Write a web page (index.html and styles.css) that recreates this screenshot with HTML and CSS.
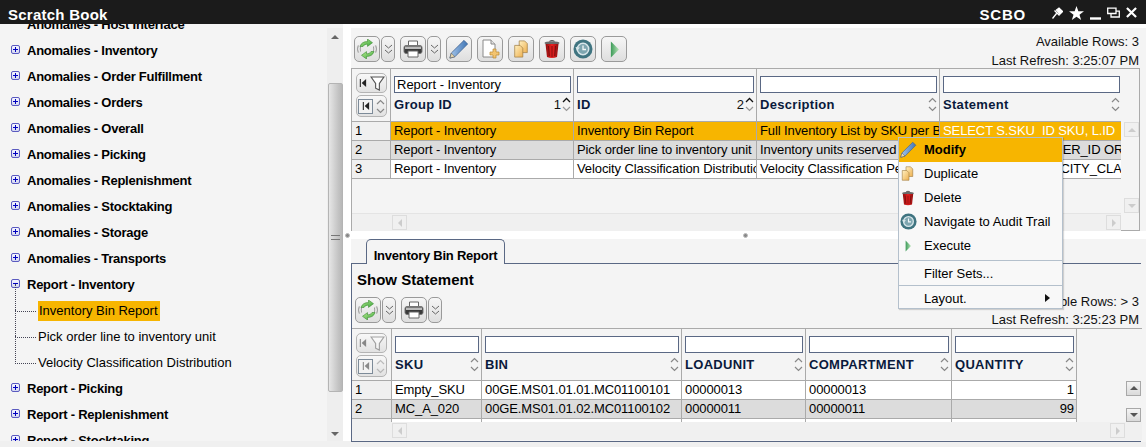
FILE: index.html
```html
<!DOCTYPE html>
<html lang="en">
<head>
    <meta charset="UTF-8">
    <title>Scratch Book</title>
    <link rel="stylesheet" href="styles.css">
</head>
<body>

<svg class="defs" width="0" height="0">
    <defs>
        <linearGradient id="grnA" x1="0" y1="0" x2="1" y2="1"><stop offset="0" stop-color="#b4ea8c"/><stop offset="1" stop-color="#3aa63c"/></linearGradient>
        <linearGradient id="grnB" x1="0" y1="0" x2="1" y2="0"><stop offset="0" stop-color="#3c9a58"/><stop offset="1" stop-color="#b8e4b8"/></linearGradient>
        <linearGradient id="redA" x1="0" y1="0" x2="1" y2="0"><stop offset="0" stop-color="#8c1010"/><stop offset=".5" stop-color="#ee2020"/><stop offset="1" stop-color="#8c1010"/></linearGradient>
        <linearGradient id="yelA" x1="0" y1="0" x2="1" y2="1"><stop offset="0" stop-color="#fff0c0"/><stop offset="1" stop-color="#eeb050"/></linearGradient>
        <linearGradient id="blueA" x1="0" y1="0" x2="1" y2="0"><stop offset="0" stop-color="#a8c8ec"/><stop offset="1" stop-color="#3f75b5"/></linearGradient>
        <symbol id="i-refresh" viewBox="0 0 20 20">
            <path d="M2.500 13 A8 8 0 0 1 2.500 7 M17.500 7 A8 8 0 0 1 17.500 13" fill="none" stroke="#8c8c8c" stroke-width="3.400"/>
            <path d="M2.500 13 A8 8 0 0 1 2.500 7 M17.500 7 A8 8 0 0 1 17.500 13" fill="none" stroke="#e8e8e8" stroke-width="1.800"/>
            <path d="M3 7.500 C4 4 7 2.400 10.500 2.600 L10.500 0 L15.500 3.700 L10.500 7.400 L10.500 5.200 C8.500 5 6.800 6 6 7.500 Z" fill="url(#grnA)" stroke="#3c8c34" stroke-width=".6"/>
            <path d="M17 12.500 C16 16 13 17.600 9.500 17.400 L9.500 20 L4.500 16.300 L9.500 12.600 L9.500 14.800 C11.500 15 13.200 14 14 12.500 Z" fill="url(#grnA)" stroke="#3c8c34" stroke-width=".6"/>
        </symbol>
        <symbol id="i-print" viewBox="0 0 20 20">
            <path d="M5.500 2 H14.500 V7 H5.500 Z" fill="#fff" stroke="#666"/>
            <rect x="1" y="6.500" width="18" height="8" rx="2" fill="#3a3a3a" stroke="#777"/>
            <rect x="2" y="7.500" width="16" height="2.500" fill="#bbb"/>
            <path d="M5 12 H15 V18 H5 Z" fill="#fff" stroke="#666"/>
        </symbol>
        <symbol id="i-pencil" viewBox="0 0 22 22">
            <path d="M1 21 L2.500 15.500 L16.500 1.500 L20.500 5.500 L6.500 19.500 Z" fill="url(#blueA)" stroke="#3d5f8c" stroke-width=".8"/>
            <path d="M1 21 L2.500 15.500 L6.500 19.500 Z" fill="#e8d8b0" stroke="#555" stroke-width=".6"/>
        </symbol>
        <symbol id="i-new" viewBox="0 0 20 20">
            <path d="M3 1 H11 L15 5 V18 H3 Z" fill="#fff" stroke="#8a8a8a"/>
            <path d="M11 1 V5 H15" fill="#e4e4e4" stroke="#8a8a8a"/>
            <path d="M13 10 H16 V13 H19 V16 H16 V19 H13 V16 H10 V13 H13 Z" fill="#f3c470" stroke="#b98a35" stroke-width=".7"/>
        </symbol>
        <symbol id="i-dup" viewBox="0 0 20 20">
            <path d="M8 1 H14 L17 4 V14 H8 Z" fill="url(#yelA)" stroke="#a07c40" stroke-width=".8"/>
            <path d="M3 6 H9 L12 9 V19 H3 Z" fill="url(#yelA)" stroke="#a07c40" stroke-width=".8"/>
        </symbol>
        <symbol id="i-del" viewBox="0 0 20 20">
            <path d="M7.500 2.500 Q10 .5 12.500 2.500" fill="none" stroke="#555" stroke-width="1.200"/>
            <ellipse cx="10" cy="4" rx="7.500" ry="1.800" fill="#6a6a6a"/>
            <path d="M3.500 5 L5 18 Q10 20 15 18 L16.500 5 Z" fill="url(#redA)"/>
            <path d="M6.500 7 L7.300 17 M10 7 V18 M13.500 7 L12.700 17" stroke="#6e0c0c" stroke-width=".9"/>
        </symbol>
        <symbol id="i-hist" viewBox="0 0 20 20">
            <circle cx="10" cy="10" r="9.500" fill="#3f7480"/>
            <circle cx="10" cy="10" r="5.700" fill="#7ea6b0" stroke="#d8e6ea" stroke-width="1.500"/>
            <path d="M10 6.500 V10.500 H13" fill="none" stroke="#f0f6f8" stroke-width="1.300"/>
            <path d="M2.500 8 L7 8.500 L4 12 Z" fill="#d8e6ea"/>
        </symbol>
        <symbol id="i-run" viewBox="0 0 10 18">
            <path d="M1 0 L10 9 L1 18 Z" fill="url(#grnB)"/>
        </symbol>
        <symbol id="i-dd" viewBox="0 0 9 11">
            <path d="M1 1 L4.500 4 L8 1 M1 6 L4.500 9 L8 6" fill="none" stroke="#666" stroke-width="1"/>
        </symbol>
        <symbol id="i-filter" viewBox="0 0 16 16">
            <path d="M1 1 H15 L10 8 V15 L6 13 V8 Z" fill="#fff" stroke="#555" stroke-width="1.200"/>
        </symbol>
        <symbol id="i-first" viewBox="0 0 9 11">
            <path d="M1.500 1 V10" stroke="#222" stroke-width="1.200"/>
            <path d="M8 1 L3 5.500 L8 10 Z" fill="#222"/>
        </symbol>
        <symbol id="i-sort" viewBox="0 0 9 15">
            <path d="M1 5 L4.500 1.500 L8 5" fill="none" stroke="#888" stroke-width="1.200"/>
            <path d="M1 10 L4.500 13.500 L8 10" fill="none" stroke="#888" stroke-width="1.200"/>
        </symbol>
        <symbol id="i-sortup" viewBox="0 0 9 15">
            <path d="M1 5 L4.500 1.500 L8 5" fill="none" stroke="#111" stroke-width="1.300"/>
            <path d="M1 10 L4.500 13.500 L8 10" fill="none" stroke="#999" stroke-width="1.200"/>
        </symbol>
    </defs>
</svg>

<header class="titlebar">
    <span class="app-title">Scratch Book</span>
    <span class="app-code">SCBO</span>
    <div class="win-icons">
        <svg width="11" height="12" viewBox="0 0 11 12"><path d="M.5 11.500 L4.500 6.500 M2.500 3.500 L7.500 8.500 M4.500 3 L7 1 L10.500 4.500 L8 7 Z" fill="#fff" stroke="#fff" stroke-width="1.300"/></svg>
        <svg width="15" height="14" viewBox="0 0 16 15"><path d="M8 0 L10 5.500 L16 5.700 L11.200 9.300 L13 15 L8 11.600 L3 15 L4.800 9.300 L0 5.700 L6 5.500 Z" fill="#fff"/></svg>
        <svg width="11" height="14" viewBox="0 0 11 14"><path d="M0 12.500 H11" stroke="#fff" stroke-width="2.400"/></svg>
        <svg width="13" height="12" viewBox="0 0 13 12"><path d="M.7 1.200 H9 V6.500 H.7 Z M4 6.500 V10 H12.300 V4.200 H9" fill="none" stroke="#fff" stroke-width="1.300"/></svg>
        <svg width="11" height="11" viewBox="0 0 12 12"><path d="M1 1 L11 11 M11 1 L1 11" stroke="#fff" stroke-width="2.400"/></svg>
    </div>
</header>

<div class="main">
    <aside class="sidebar">
        <div class="tree">
            <ul class="tree-list">
                <li class="node"><span class="exp gone"></span>Anomalies - Host Interface</li>
                <li class="node"><span class="exp"></span>Anomalies - Inventory</li>
                <li class="node"><span class="exp"></span>Anomalies - Order Fulfillment</li>
                <li class="node"><span class="exp"></span>Anomalies - Orders</li>
                <li class="node"><span class="exp"></span>Anomalies - Overall</li>
                <li class="node"><span class="exp"></span>Anomalies - Picking</li>
                <li class="node"><span class="exp"></span>Anomalies - Replenishment</li>
                <li class="node"><span class="exp"></span>Anomalies - Stocktaking</li>
                <li class="node"><span class="exp"></span>Anomalies - Storage</li>
                <li class="node"><span class="exp"></span>Anomalies - Transports</li>
                <li class="node"><span class="exp open"></span>Report - Inventory</li>
                <li class="leaf"><span class="picked">Inventory Bin Report</span></li>
                <li class="leaf">Pick order line to inventory unit</li>
                <li class="leaf last">Velocity Classification Distribution</li>
                <li class="node"><span class="exp"></span>Report - Picking</li>
                <li class="node"><span class="exp"></span>Report - Replenishment</li>
                <li class="node"><span class="exp"></span>Report - Stocktaking</li>
            </ul>
        </div>
        <div class="vscroll">
            <span class="tri-up"></span>
            <div class="thumb"><span class="grip"></span></div>
            <span class="tri-down"></span>
        </div>
    </aside>

    <div class="content">
        <section class="pane-top">
            <div class="toolbar-row">
                <div class="toolbar">
                    <button class="btn"><svg width="20" height="20"><use href="#i-refresh"/></svg></button>
                    <button class="btn-dd"><svg width="9" height="11"><use href="#i-dd"/></svg></button>
                    <button class="btn gap-l"><svg width="20" height="20"><use href="#i-print"/></svg></button>
                    <button class="btn-dd"><svg width="9" height="11"><use href="#i-dd"/></svg></button>
                    <button class="btn gap-l"><svg width="20" height="20"><use href="#i-pencil"/></svg></button>
                    <button class="btn gap-l"><svg width="20" height="20"><use href="#i-new"/></svg></button>
                    <button class="btn gap-l"><svg width="18" height="18"><use href="#i-dup"/></svg></button>
                    <button class="btn gap-l"><svg width="20" height="20"><use href="#i-del"/></svg></button>
                    <button class="btn gap-l"><svg width="20" height="20"><use href="#i-hist"/></svg></button>
                    <button class="btn gap-l"><svg width="9" height="17"><use href="#i-run"/></svg></button>
                </div>
                <div class="info">
                    <div>Available Rows: 3</div>
                    <div>Last Refresh: 3:25:07 PM</div>
                </div>
            </div>

            <div class="grid grid-a">
                <div class="grid-body">
                    <div class="row head">
                        <div class="cell rowhead">
                            <div class="mini"><svg width="8" height="10"><use href="#i-first"/></svg><svg width="15" height="15"><use href="#i-filter"/></svg></div>
                            <div class="mini tall"><span class="box"><svg width="8" height="10"><use href="#i-first"/></svg></span><svg width="9" height="15"><use href="#i-sort"/></svg></div>
                        </div>
                        <div class="cell">
                            <input class="filter" type="text" value="Report - Inventory">
                            <div class="label"><span>Group ID</span><em>1</em><svg width="9" height="15"><use href="#i-sortup"/></svg></div>
                        </div>
                        <div class="cell">
                            <input class="filter" type="text">
                            <div class="label"><span>ID</span><em>2</em><svg width="9" height="15"><use href="#i-sortup"/></svg></div>
                        </div>
                        <div class="cell">
                            <input class="filter" type="text">
                            <div class="label"><span>Description</span><svg width="9" height="15"><use href="#i-sort"/></svg></div>
                        </div>
                        <div class="cell">
                            <input class="filter" type="text">
                            <div class="label"><span>Statement</span><svg width="9" height="15"><use href="#i-sort"/></svg></div>
                        </div>
                    </div>
                    <div class="row data selected">
                        <div class="cell rowhead">1</div>
                        <div class="cell">Report - Inventory</div>
                        <div class="cell">Inventory Bin Report</div>
                        <div class="cell">Full Inventory List by SKU per Bin</div>
                        <div class="cell light">SELECT S.SKU_ID SKU, L.ID</div>
                    </div>
                    <div class="row data shaded">
                        <div class="cell rowhead">2</div>
                        <div class="cell">Report - Inventory</div>
                        <div class="cell">Pick order line to inventory unit</div>
                        <div class="cell">Inventory units reserved for pick</div>
                        <div class="cell">SELECT POLS.ORDER_ID ORDER</div>
                    </div>
                    <div class="row data">
                        <div class="cell rowhead">3</div>
                        <div class="cell">Report - Inventory</div>
                        <div class="cell">Velocity Classification Distribution</div>
                        <div class="cell">Velocity Classification Per SKU</div>
                        <div class="cell">SELECT SKU.VELOCITY_CLASS</div>
                    </div>
                </div>
                <div class="side-bar">
                    <span class="sb-btn"><i class="tri-up"></i></span>
                    <span class="sb-btn"><i class="tri-down"></i></span>
                </div>
                <div class="bottom-bar">
                    <span class="sb-btn"><i class="tri-left"></i></span>
                    <span class="sb-btn"><i class="tri-right"></i></span>
                </div>
            </div>
        </section>

        <div class="splitter"><span class="dot"></span><span class="dot"></span></div>

        <section class="pane-bottom">
            <div class="tabs"><span class="tab">Inventory Bin Report</span></div>
            <div class="tab-panel">
                <h2 class="panel-title">Show Statement</h2>
                <div class="toolbar-row low">
                    <div class="toolbar">
                        <button class="btn"><svg width="20" height="20"><use href="#i-refresh"/></svg></button>
                        <button class="btn-dd"><svg width="9" height="11"><use href="#i-dd"/></svg></button>
                        <button class="btn gap-l"><svg width="20" height="20"><use href="#i-print"/></svg></button>
                        <button class="btn-dd"><svg width="9" height="11"><use href="#i-dd"/></svg></button>
                    </div>
                    <div class="info">
                        <div>Available Rows: &gt; 3</div>
                        <div>Last Refresh: 3:25:23 PM</div>
                    </div>
                </div>

                <div class="grid grid-b">
                    <div class="grid-body">
                        <div class="row head">
                            <div class="cell rowhead dim">
                                <div class="mini"><svg width="8" height="10"><use href="#i-first"/></svg><svg width="15" height="15"><use href="#i-filter"/></svg></div>
                                <div class="mini tall"><span class="box"><svg width="8" height="10"><use href="#i-first"/></svg></span><svg width="9" height="15"><use href="#i-sort"/></svg></div>
                            </div>
                            <div class="cell"><input class="filter" type="text"><div class="label"><span>SKU</span><svg width="9" height="15"><use href="#i-sort"/></svg></div></div>
                            <div class="cell"><input class="filter" type="text"><div class="label"><span>BIN</span><svg width="9" height="15"><use href="#i-sort"/></svg></div></div>
                            <div class="cell"><input class="filter" type="text"><div class="label"><span>LOADUNIT</span><svg width="9" height="15"><use href="#i-sort"/></svg></div></div>
                            <div class="cell"><input class="filter" type="text"><div class="label"><span>COMPARTMENT</span><svg width="9" height="15"><use href="#i-sort"/></svg></div></div>
                            <div class="cell"><input class="filter" type="text"><div class="label"><span>QUANTITY</span><svg width="9" height="15"><use href="#i-sort"/></svg></div></div>
                        </div>
                        <div class="row data">
                            <div class="cell rowhead">1</div>
                            <div class="cell">Empty_SKU</div>
                            <div class="cell">00GE.MS01.01.01.MC01100101</div>
                            <div class="cell">00000013</div>
                            <div class="cell">00000013</div>
                            <div class="cell num">1</div>
                        </div>
                        <div class="row data shaded">
                            <div class="cell rowhead">2</div>
                            <div class="cell">MC_A_020</div>
                            <div class="cell">00GE.MS01.01.02.MC01100102</div>
                            <div class="cell">00000011</div>
                            <div class="cell">00000011</div>
                            <div class="cell num">99</div>
                        </div>
                        <div class="row data stub">
                            <div class="cell rowhead"></div>
                            <div class="cell"></div>
                            <div class="cell"></div>
                            <div class="cell"></div>
                            <div class="cell"></div>
                            <div class="cell"></div>
                        </div>
                    </div>
                    <div class="side-bar">
                        <span class="sb-btn strong"><i class="tri-up"></i></span>
                        <span class="sb-btn strong"><i class="tri-down"></i></span>
                    </div>
                    <div class="bottom-bar">
                        <span class="sb-btn"><i class="tri-left"></i></span>
                        <span class="sb-btn"><i class="tri-right"></i></span>
                    </div>
                </div>
            </div>
        </section>
    </div>
</div>

<!-- context menu over the grid -->
<div class="menu">
    <div class="menu-item active"><span class="menu-ico"><svg width="17" height="17"><use href="#i-pencil"/></svg></span>Modify</div>
    <div class="menu-item"><span class="menu-ico"><svg width="15" height="15"><use href="#i-dup"/></svg></span>Duplicate</div>
    <div class="menu-item"><span class="menu-ico"><svg width="16" height="16"><use href="#i-del"/></svg></span>Delete</div>
    <div class="menu-item"><span class="menu-ico"><svg width="17" height="17"><use href="#i-hist"/></svg></span>Navigate to Audit Trail</div>
    <div class="menu-item"><span class="menu-ico run"><svg width="6" height="14"><use href="#i-run"/></svg></span>Execute</div>
    <div class="menu-sep first"></div>
    <div class="menu-item short"><span class="menu-ico"></span>Filter Sets...</div>
    <div class="menu-sep"></div>
    <div class="menu-item short"><span class="menu-ico"></span>Layout.<i class="menu-arrow"></i></div>
</div>

</body>
</html>
```

FILE: styles.css
```css
* {
    box-sizing: border-box;
}
html, body {
    height: 100%;
}
body {
    margin: 0;
    height: 447px;
    overflow: hidden;
    background: #f0f0f0;
    font-family: "Liberation Sans", Arial, sans-serif;
    font-size: 13px;
    color: #000;
}
.defs {
    display: block;
    height: 0;
}

/* title bar */
.titlebar {
    height: 24px;
    background: #1b1b1b;
    color: #fff;
    display: flex;
    align-items: center;
    padding: 4px 9px 0 8px;
    font-weight: bold;
}
.app-title {
    font-size: 15px;
    letter-spacing: .25px;
    flex: 1;
}
.app-code {
    font-size: 15px;
    letter-spacing: .8px;
    margin-right: 26px;
}
.win-icons {
    display: flex;
    align-items: center;
    gap: 6px;
    margin-top: -3px;
}

.main {
    display: flex;
    height: 417px;
    background: #fff;
}

/* tree */
.sidebar {
    width: 343px;
    display: flex;
    background: #f4f4f4;
    overflow: hidden;
}
.tree {
    width: 327px;
    overflow: hidden;
}
.tree-list {
    list-style: none;
    margin: -12px 0 0;
    padding: 0 0 0 11px;
}
.node, .leaf {
    height: 26px;
    line-height: 26px;
    white-space: nowrap;
}
.node {
    display: flex;
    align-items: center;
    font-weight: bold;
    letter-spacing: -.25px;
}
.exp {
    width: 9px;
    height: 9px;
    margin: -4px 7px 0 0;
    border: 1px solid #5a5ac0;
    border-radius: 2px;
    background: linear-gradient(#f4f4ff, #d4d8f0);
    position: relative;
}
.exp.gone {
    visibility: hidden;
}
.exp::before, .exp:not(.open)::after {
    content: "";
    position: absolute;
    background: #0000c0;
}
.exp::before {
    left: 1px;
    top: 3px;
    width: 5px;
    height: 1px;
}
.exp::after {
    left: 3px;
    top: 1px;
    width: 1px;
    height: 5px;
}
.leaf {
    padding-left: 27px;
    position: relative;
}
.leaf::before {
    content: "";
    position: absolute;
    left: 4px;
    top: -14px;
    width: 20px;
    height: 27px;
    border-left: 1px dotted #445;
    border-bottom: 1px dotted #445;
}
.picked {
    display: inline-block;
    height: 20px;
    line-height: 20px;
    background: #f7b500;
    padding: 0 2px 0 1px;
    margin-top: 2px;
}

.vscroll {
    width: 16px;
    background: #eeeeee;
    margin-top: 4px;
    height: 413px;
    position: relative;
    display: flex;
    flex-direction: column;
    align-items: center;
}
.thumb {
    width: 15px;
    height: 309px;
    margin-top: 44px;
    border: 1px solid #b4b4b4;
    border-radius: 2px;
    background: linear-gradient(90deg, #e6e6e6, #c4c4c4 70%, #b8b8b8);
    display: flex;
    align-items: center;
    justify-content: center;
}
.grip {
    width: 9px;
    height: 5px;
    border-top: 1px solid #777;
    border-bottom: 1px solid #777;
}
.tri-up, .tri-down, .tri-left, .tri-right {
    display: block;
    width: 0;
    height: 0;
    border-style: solid;
    border-color: transparent;
}
.tri-up {
    border-width: 0 4px 4px;
    border-bottom-color: #666;
}
.tri-down {
    border-width: 4px 4px 0;
    border-top-color: #666;
}
.tri-left {
    border-width: 4px 4px 4px 0;
    border-right-color: #ccc;
}
.tri-right {
    border-width: 4px 0 4px 4px;
    border-left-color: #ccc;
}
.vscroll > .tri-up {
    margin-top: 7px;
}
.vscroll > .tri-down {
    margin-top: 40px;
}

/* right side */
.content {
    flex: 1;
    padding-left: 8px;
    display: flex;
    flex-direction: column;
}
.pane-top {
    background: #f4f4f4;
    padding-top: 8px;
    height: 203px;
    margin-top: 4px;
    flex: none;
}
.toolbar-row {
    display: flex;
    justify-content: space-between;
    height: 32px;
    padding-left: 3px;
}
.toolbar {
    display: flex;
    align-items: flex-start;
}
.btn, .btn-dd {
    height: 26px;
    padding: 0;
    border: 1px solid #9a9a9a;
    border-radius: 5px;
    background: linear-gradient(#f6f6f6, #dedede);
    display: flex;
    align-items: center;
    justify-content: center;
}
.btn {
    width: 26px;
}
.btn-dd {
    width: 14px;
    margin-left: 1px;
}
.gap-l {
    margin-left: 5px;
}
.info {
    text-align: right;
    line-height: 19px;
    padding-right: 7px;
    margin-top: -4px;
    color: #111;
}
.low .info {
    line-height: 18px;
    padding-right: 2px;
}

.grid {
    display: grid;
    grid-template-columns: 1fr 18px;
    grid-template-rows: 144px 18px;
    width: 789px;
    height: 163px;
    border: 1px solid #aaa;
    background: #f4f4f4;
}
.grid-body {
    overflow: hidden;
}
.row {
    display: grid;
}
.grid-a .row {
    grid-template-columns: 39px 183px 183px 183px 183px;
    width: 771px;
}
.grid-b {
    grid-template-columns: 1fr 64px;
    grid-template-rows: 93px 18px;
    height: 112px;
    border-width: 1px 0 0;
    width: 790px;
}
.grid-b .row {
    grid-template-columns: 40px 90px 200px 124px 146px 125px;
    width: 725px;
}
.cell {
    border-right: 1px solid #aaa;
    border-bottom: 1px solid #aaa;
    padding: 0 2px 0 3px;
    white-space: nowrap;
    overflow: hidden;
}
.head .cell {
    height: 52px;
    padding: 7px 2px 0 3px;
}
.grid-a .head .cell {
    height: 53px;
}
.head .rowhead {
    padding: 4px 3px 0 4px;
}
.data .cell {
    height: 19px;
    line-height: 18px;
    letter-spacing: -.1px;
    background: #fff;
}
.data .rowhead {
    background: #f0f0f0;
}
.data.selected .cell {
    background: #f7b500;
}
.data.selected .rowhead {
    background: #f0f0f0;
}
.data.shaded .cell {
    background: #dcdcdc;
}
.data.shaded .rowhead {
    background: #e6e6e6;
}
.data.stub .cell {
    height: 10px;
}
.cell.light {
    color: #fff;
}
.cell.num {
    text-align: right;
}
.filter {
    display: block;
    width: 100%;
    height: 17px;
    padding: 0 2px;
    border: 1px solid #5a6884;
    border-radius: 0;
    background: #fff;
    font: 13px "Liberation Sans", Arial, sans-serif;
    color: #000;
    outline: none;
}
.label {
    display: flex;
    align-items: center;
    height: 20px;
    margin-top: 1px;
    color: #0a1a3c;
}
.label span {
    flex: 1;
    font-weight: bold;
    letter-spacing: .3px;
}
.label em {
    font-style: normal;
    color: #111;
    margin-right: 1px;
}
.mini {
    height: 20px;
    width: 31px;
    margin-bottom: 2px;
    border: 1px solid #b4b4b4;
    border-radius: 5px;
    background: linear-gradient(#f8f8f8, #e2e2e2);
    display: flex;
    align-items: center;
    justify-content: space-around;
}
.mini.tall {
    height: 22px;
}
.box {
    display: flex;
    align-items: center;
    justify-content: center;
    width: 15px;
    height: 15px;
    border: 1px solid #7d8b99;
    background: #f2f2f2;
}
.dim svg {
    opacity: .5;
}

.side-bar {
    display: flex;
    flex-direction: column;
    justify-content: space-between;
    align-items: flex-end;
    background: #f4f4f4;
}
.grid-a .side-bar {
    padding-top: 53px;
}
.grid-b .side-bar {
    padding: 52px 1px 0 0;
    justify-content: flex-start;
    gap: 12px;
}
.bottom-bar {
    display: flex;
    justify-content: space-between;
    padding: 1px 0 1px 40px;
    background: #f0f0f0;
}
.grid-a .bottom-bar {
    border-top: 1px solid #e4e4e4;
}
.grid-b .bottom-bar {
    grid-column: 1 / span 2;
    padding-right: 17px;
}
.sb-btn {
    width: 15px;
    height: 15px;
    border: 1px solid #ddd;
    background: #f0f0f0;
    display: flex;
    align-items: center;
    justify-content: center;
}
.sb-btn .tri-up {
    border-bottom-color: #ccc;
}
.sb-btn .tri-down {
    border-top-color: #ccc;
}
.sb-btn.strong {
    border-color: #a8a8a8;
    background: linear-gradient(#f4f4f4, #dadada);
}
.sb-btn.strong .tri-up {
    border-bottom-color: #555;
}
.sb-btn.strong .tri-down {
    border-top-color: #555;
}

.splitter {
    height: 8px;
    flex: none;
    display: flex;
    justify-content: space-between;
    align-items: center;
    width: 403px;
    margin-left: -6px;
    background: #fff;
}
.dot {
    width: 5px;
    height: 5px;
    border-radius: 50%;
    background: #888;
    border: 1px solid #bbb;
}

.pane-bottom {
    flex: 1;
    background: #f4f4f4;
}
.tabs {
    height: 24px;
    padding-left: 15px;
}
.tab {
    display: block;
    width: 139px;
    height: 25px;
    line-height: 32px;
    text-align: center;
    font-weight: bold;
    letter-spacing: -.25px;
    background: #f4f4f4;
    border: 1px solid #5a6884;
    border-bottom: 0;
    border-radius: 5px 5px 0 0;
    position: relative;
    z-index: 1;
}
.tab-panel {
    border: 1px solid #5a6884;
    border-right: 0;
    height: 179px;
    width: 790px;
}
.panel-title {
    margin: 0;
    font-size: 15px;
    font-weight: bold;
    padding: 7px 0 0 5px;
    height: 33px;
    line-height: 18px;
}
.toolbar-row.low {
    height: 31px;
}

/* popup */
.menu {
    position: absolute;
    left: 898px;
    top: 137px;
    width: 165px;
    height: 172px;
    overflow: hidden;
    background: #f8f8f8;
    border: 1px solid #b4c0cc;
    box-shadow: 1px 1px 1px rgba(0, 0, 0, .15);
}
.menu-item {
    display: flex;
    align-items: center;
    height: 24px;
    padding-bottom: 1px;
    white-space: nowrap;
    position: relative;
}
.menu-item.short {
    height: 22px;
    padding: 1px 0 0;
}
.menu-item.active {
    background: #f7b500;
    font-weight: bold;
}
.menu-ico {
    width: 25px;
    padding-left: 1px;
    display: flex;
    align-items: center;
    flex: none;
}
.menu-ico.run {
    padding-left: 6px;
}
.menu-sep {
    height: 1px;
    margin: 1px 0;
    background: #b4c0cc;
}
.menu-sep.first {
    margin: 2px 0 1px;
}
.menu-arrow {
    position: absolute;
    right: 12px;
    top: 7px;
    width: 0;
    height: 0;
    border-style: solid;
    border-width: 4px 0 4px 5px;
    border-color: transparent transparent transparent #111;
}
```
